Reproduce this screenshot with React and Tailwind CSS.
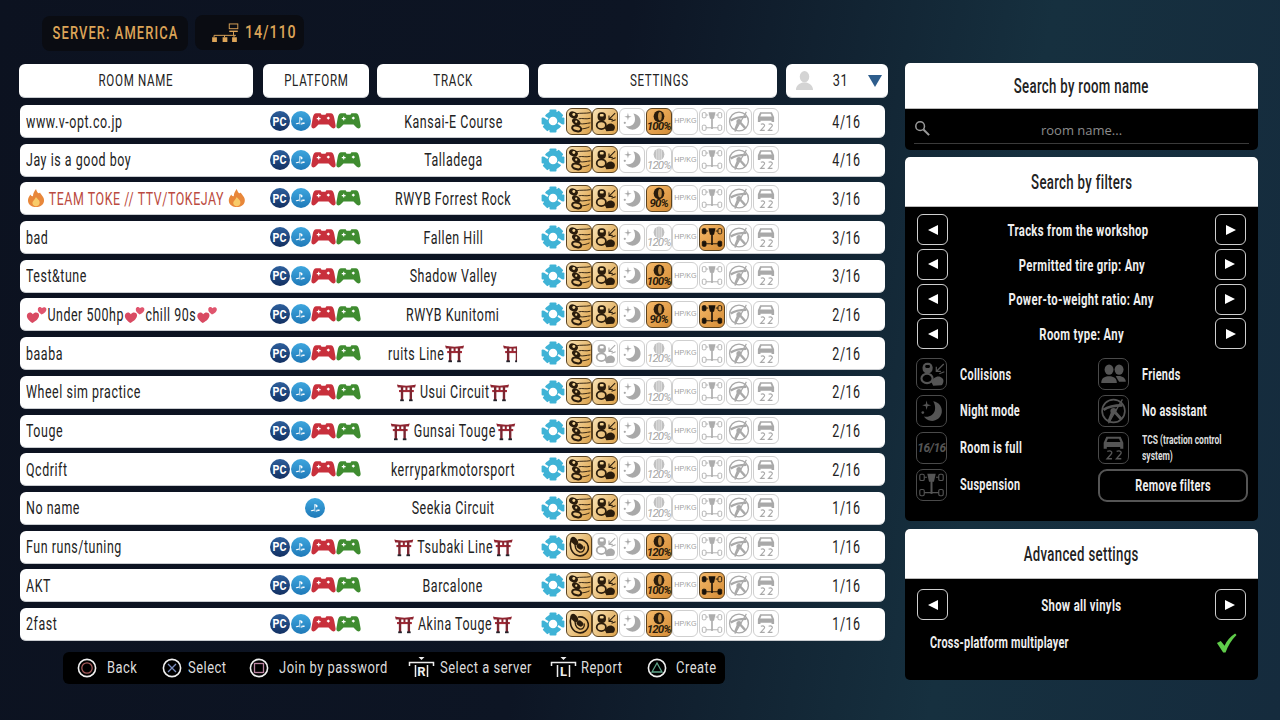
import React from "react";

const F = "font-['Roboto','Liberation_Sans',sans-serif]";
const D = "#2a1c0c";
const G = "#a9a9a9";

function Torii({ className = "w-[29px] h-[20px]" }) {
  return (
    <svg viewBox="0 0 20 20" preserveAspectRatio="none" className={`${className} shrink-0`}>
      <path d="M0.5 2.5 C6 4 14 4 19.5 2.5 L18.6 5.6 H1.4Z" fill="#8f2430" />
      <rect x="2.6" y="8" width="14.8" height="2.1" fill="#a42b38" />
      <rect x="4.4" y="5" width="2.4" height="14" fill="#7c2530" />
      <rect x="13.2" y="5" width="2.4" height="14" fill="#7c2530" />
      <rect x="9" y="5" width="2" height="3.4" fill="#8f2430" />
      <rect x="3.8" y="17.4" width="3.6" height="1.8" fill="#23232b" />
      <rect x="12.6" y="17.4" width="3.6" height="1.8" fill="#23232b" />
    </svg>
  );
}

function Flame() {
  return (
    <svg viewBox="0 0 20 20" preserveAspectRatio="none" className="w-[29px] h-[20px] shrink-0">
      <path d="M10 1 C11 5 13 6 14 4.5 C15 7 18.5 9 18 13 C17.5 17 14 19 10 19 C6 19 2.5 17 2 13 C1.7 10 3.5 8 4.5 6.5 C5 8 6 8.5 7 8 C7 5 8.5 3 10 1Z" fill="#e8873a" />
      <path d="M10 9 C11 11 14 12 13.6 15 C13.3 17.4 11.5 18.2 10 18.2 C8 18.2 6.4 17 6.4 15 C6.4 13 8.5 12 10 9Z" fill="#f8cb6a" />
    </svg>
  );
}

function Hearts() {
  return (
    <svg viewBox="0 0 22 20" preserveAspectRatio="none" className="w-[31px] h-[20px] shrink-0">
      <path d="M6.5 19 C2 16 0.5 13.5 1 11 C1.6 8 5.4 7.6 7 10.2 C8.8 7.8 13 8 13.4 11 C13.8 14 10.4 17 6.5 19Z" fill="#d94a62" />
      <path d="M16 10.6 C13 8.6 11.8 6.8 12.2 4.8 C12.7 2.8 15.2 2.4 16.4 4.2 C17.8 2.6 20.8 3 21 5.2 C21.2 7.4 19 9.4 16 10.6Z" fill="#e0556e" />
    </svg>
  );
}

function Pad({ color }) {
  return (
    <svg viewBox="0 0 26 18" className="w-[25px] h-[18px] -ml-[1px] shrink-0">
      <path d="M5.5 1 H10 L11 2.6 H15 L16 1 H20.5 C22.6 1 23.6 3 24.2 6 L25.6 13.6 C26 16.8 22.8 17.8 21 15.6 L18.2 12.6 H7.8 L5 15.6 C3.2 17.8 0 16.8 0.4 13.6 L1.8 6 C2.4 3 3.4 1 5.5 1Z" fill={color} />
      <path d="M6 6.6 H10 M8 4.6 V8.6" stroke="#fff" strokeWidth="1.2" />
      <path d="M18 4.2 L19.8 6 L18 7.8 L16.2 6Z" fill="#fff" />
    </svg>
  );
}

function PcBadge() {
  return (
    <div className="w-[20px] h-[20px] shrink-0 rounded-full bg-[linear-gradient(180deg,#2d5f9c,#123062)] flex items-center justify-center">
      <span className="text-[13px] font-bold text-white leading-none scale-x-[.82] tracking-[0px]">PC</span>
    </div>
  );
}

function PsBadge() {
  return (
    <div className="w-[20px] h-[20px] shrink-0 rounded-full bg-[linear-gradient(180deg,#3ea6de,#1f79b8)] flex items-center justify-center">
      <svg viewBox="0 0 14 12" className="w-[11px] h-[10px]">
        <path d="M5.6 1 L8.6 2 C10 2.6 10 5.4 8.2 5.2 L7.3 4.9 V2.8 H6.6 V10.6 L5.6 10.2Z" fill="#fff" />
        <path d="M5 8 L1.6 9 C0.4 9.5 1 10.4 2.4 10.2 L5 9.4Z M7.4 8.4 C9 7.6 12.6 7.5 12.8 8.6 C12.9 9.4 10 10.2 7.4 10.8 V9.8 L10.6 8.9 L7.4 9.2Z" fill="#fff" />
      </svg>
    </div>
  );
}

function Gear() {
  return (
    <svg viewBox="0 0 24 24" className="w-[24px] h-[24px] shrink-0">
      <g fill="#3fb3d6">
        <rect x="8.5" y="0.6" width="7" height="5" rx="1" />
        <rect x="8.5" y="18.4" width="7" height="5" rx="1" />
        <rect x="0.6" y="8.5" width="5" height="7" rx="1" />
        <rect x="18.4" y="8.5" width="5" height="7" rx="1" />
        <rect x="8.5" y="0.6" width="7" height="5" rx="1" transform="rotate(45 12 12)" />
        <rect x="8.5" y="0.6" width="7" height="5" rx="1" transform="rotate(225 12 12)" />
      </g>
      <circle cx="12" cy="12" r="7" fill="none" stroke="#3fb3d6" strokeWidth="5.4" />
      <path d="M1.5 6.5 L7 10.2 M22.5 17.5 L17 13.8" stroke="#fff" strokeWidth="2" />
    </svg>
  );
}

function DriftGlyph({ c }) {
  return (
    <g fill="none" stroke={c} strokeLinecap="round">
      <path d="M10 4.6 C15 3.5 20 4.5 25 3.5 M13 10 C17 9 20 11 25 9.6 M14 15.5 C18 16 21 15 25 14.5 M15 21 C18 21 21 20.5 24 19" strokeWidth="1" />
      <ellipse cx="7" cy="6" rx="5" ry="3.6" fill={c} stroke="none" transform="rotate(25 7 6)" />
      <ellipse cx="10" cy="13.5" rx="5" ry="3.2" fill={c} stroke="none" transform="rotate(35 10 13.5)" />
      <ellipse cx="10.5" cy="20.5" rx="5" ry="3" fill="none" strokeWidth="2.2" transform="rotate(15 10.5 20.5)" />
      <circle cx="7.4" cy="5.4" r="1.6" fill="#f3d291" stroke="none" />
      <circle cx="10" cy="13.2" r="1.2" fill="#f3d291" stroke="none" />
    </g>
  );
}

function SwirlGlyph({ c }) {
  return (
    <g fill="none" stroke={c} strokeLinecap="round">
      <path d="M5 5 C2 11 4 20 11 22.5 C18 25 24 19 23 13 C22 8 17 5 12.5 6" strokeWidth="1.7" />
      <path d="M9 8 C8 13 9.5 18 13.5 19 C17 19.8 19.4 16.8 18.6 13.4" strokeWidth="1.5" />
      <ellipse cx="8" cy="7" rx="5" ry="3.2" fill={c} stroke="none" transform="rotate(50 8 7)" />
      <ellipse cx="14" cy="13" rx="3.8" ry="3" fill={c} stroke="none" transform="rotate(40 14 13)" />
    </g>
  );
}

function CollideGlyph({ c, bg }) {
  return (
    <g>
      <rect x="5" y="3" width="9" height="9.4" rx="4" fill={c} />
      <rect x="7.4" y="5" width="4.2" height="2.6" rx="1" fill={bg} />
      <ellipse cx="9" cy="17" rx="5" ry="4.2" fill="none" stroke={c} strokeWidth="1.9" />
      <path d="M13 20.5 C14 16.4 18 14.4 21 15.6 C24.4 17 24.5 20.5 22 23 L14.5 23.5Z" fill={c} />
      <path d="M24 4 L17.5 10.5 M17.3 6.6 V10.7 H21.4 M24.5 11 L20 12.8" stroke={c} strokeWidth="1.1" fill="none" />
    </g>
  );
}

function MoonGlyph({ c = G }) {
  return (
    <g fill={c}>
      <path d="M14.5 4.2 C20 5 23 9.6 22.2 14.4 C21.4 19.6 16.5 22.4 12.2 21.8 C9.6 21.4 7.4 20 6.2 18 C11 19 15 16.5 16 12.6 C16.7 9.6 16 6.6 14.5 4.2Z" />
      <path d="M8.6 3.6 L9.4 7 L12.6 7.9 L9.4 8.8 L8.6 12 L7.8 8.8 L4.6 7.9 L7.8 7Z" />
      <circle cx="5.2" cy="14.4" r="1.2" />
    </g>
  );
}

function TireGlyph({ c, hot }) {
  return (
    <g>
      <ellipse cx="13" cy="7.4" rx="5.8" ry="6.4" fill={hot ? c : "#c0c0c0"} />
      {hot ? (
        <ellipse cx="14" cy="7.4" rx="2" ry="4.6" fill="#c08a40" />
      ) : (
        <path d="M13 1 V14 M10.6 1.6 V13.4 M15.4 1.6 V13.4" stroke="#f2f2f2" strokeWidth="0.8" />
      )}
    </g>
  );
}

function SuspGlyph({ c, bg }) {
  return (
    <g fill="none" stroke={c}>
      <rect x="2.5" y="3.4" width="4" height="5.6" rx="1.2" strokeWidth="1" fill={bg ? c : "none"} />
      <rect x="19.5" y="3.4" width="4" height="5.6" rx="1.2" strokeWidth="1" fill="none" />
      <rect x="2.5" y="17" width="4" height="5.6" rx="1.2" strokeWidth="1" fill={bg ? c : "none"} />
      <rect x="19.5" y="17" width="4" height="5.6" rx="1.2" strokeWidth="1" fill={bg ? c : "none"} />
      <path d="M6.5 6 H9 M17 6 H19.5 M6.5 19.8 H19.5" strokeWidth="1" />
      <path d="M9.2 3 H16.8 L15.2 10 H10.8Z" fill={c} stroke="none" />
      <path d="M13 9 V21" strokeWidth="1.8" />
    </g>
  );
}

function WheelGlyph({ c }) {
  return (
    <g fill="none" stroke={c}>
      <circle cx="13" cy="13" r="10.2" strokeWidth="1.5" />
      <path d="M4 12 C8 9.2 15 8 21 8 M12 14.4 L9 22 M14.8 14.6 L20 20.4" strokeWidth="2.6" />
      <circle cx="13" cy="13" r="2.8" fill={c} stroke="none" />
      <path d="M21 2.6 L8.5 24" strokeWidth="1.2" />
    </g>
  );
}

function TcsGlyph({ c, bg = "#fff" }) {
  return (
    <g>
      <path d="M6.6 3 H19.4 L21.8 8.4 V13.6 H19 V12.2 H7 V13.6 H4.2 V8.4Z" fill={c} />
      <path d="M8 4.6 H18 L19.2 7.6 H6.8Z" fill={bg} />
      <path d="M7.4 16 C11 14.8 12.6 17 10.6 18.8 L7.2 22.6 H11.6 M15.8 16 C19.4 14.8 21 17 19 18.8 L15.6 22.6 H20" fill="none" stroke={c} strokeWidth="1.2" />
    </g>
  );
}

function Tile({ on, tone = "a", children }) {
  const cls =
    tone === "hot"
      ? "relative w-[26px] h-[27px] shrink-0 rounded-[6px] border border-[#5b4320] bg-[linear-gradient(135deg,#f5b868,#d48c36)]"
      : on
      ? "relative w-[26px] h-[27px] shrink-0 rounded-[6px] border border-[#5b4320] bg-[linear-gradient(120deg,#f8e2b4,#dda24a)]"
      : "relative w-[26px] h-[27px] shrink-0 rounded-[6px] border border-[#cfcfcf] bg-white";
  return <div className={cls}>{children}</div>;
}

function Svg({ children }) {
  return (
    <svg viewBox="0 0 26 26" className="w-full h-full block">
      {children}
    </svg>
  );
}

function TireTile({ value, on }) {
  return (
    <Tile on={on} tone={on ? "hot" : "a"}>
      <Svg>
        <TireGlyph c="#2a1c0c" hot={on} />
      </Svg>
      <span
        className={
          on
            ? "absolute left-0 right-0 bottom-[1px] text-center text-[11.5px] leading-none italic font-bold text-[#2a1c0c] tracking-[-0.9px]"
            : "absolute left-0 right-0 bottom-[1px] text-center text-[11.5px] leading-none italic text-[#a5a5a5] tracking-[-0.9px]"
        }
      >
        {value}
      </span>
    </Tile>
  );
}

function HpTile() {
  return (
    <Tile>
      <div className="w-full h-full flex items-center justify-center text-[8px] text-[#a0a0a0] font-['Liberation_Sans',sans-serif] leading-none tracking-normal">
        <span className="scale-x-[.9]">HP/KG</span>
      </div>
    </Tile>
  );
}

function SettingsIcons({ r }) {
  return (
    <div className="w-[240px] shrink-0 flex items-center pl-[2px] gap-[0.7px]">
      <Gear />
      <Tile on>
        <Svg>{r.swirl ? <SwirlGlyph c={D} /> : <DriftGlyph c={D} />}</Svg>
      </Tile>
      <Tile on={!r.offB}>
        <Svg>
          <CollideGlyph c={r.offB ? "#a9a9a9" : D} bg={r.offB ? "#fff" : "#f3d291"} />
        </Svg>
      </Tile>
      <Tile>
        <Svg>
          <MoonGlyph />
        </Svg>
      </Tile>
      <TireTile value={r.tire} on={r.tireOn} />
      <HpTile />
      <Tile on={r.susp} tone={r.susp ? "hot" : "a"}>
        <Svg>
          <SuspGlyph c={r.susp ? "#1b130a" : "#adadad"} bg={r.susp} />
        </Svg>
      </Tile>
      <Tile>
        <Svg>
          <WheelGlyph c={G} />
        </Svg>
      </Tile>
      <Tile>
        <Svg>
          <TcsGlyph c={G} />
        </Svg>
      </Tile>
    </div>
  );
}

const rows = [
  { name: "www.v-opt.co.jp", track: "Kansai-E Course", tire: "100%", tireOn: true, n: "4/16" },
  { name: "Jay is a good boy", track: "Talladega", tire: "120%", n: "4/16" },
  { name: "TEAM TOKE // TTV/TOKEJAY", flame: true, track: "RWYB Forrest Rock", tire: "90%", tireOn: true, n: "3/16" },
  { name: "bad", track: "Fallen Hill", tire: "120%", susp: true, n: "3/16" },
  { name: "Test&tune", track: "Shadow Valley", tire: "100%", tireOn: true, n: "3/16" },
  { hearts: true, track: "RWYB Kunitomi", tire: "90%", tireOn: true, susp: true, n: "2/16" },
  { name: "baaba", cut: true, track: "ruits Line", offB: true, tire: "120%", n: "2/16" },
  { name: "Wheel sim practice", torii: true, track: "Usui Circuit", tire: "120%", n: "2/16" },
  { name: "Touge", torii: true, track: "Gunsai Touge", tire: "120%", n: "2/16" },
  { name: "Qcdrift", track: "kerryparkmotorsport", tire: "120%", n: "2/16" },
  { name: "No name", psOnly: true, track: "Seekia Circuit", tire: "120%", n: "1/16" },
  { name: "Fun runs/tuning", torii: true, track: "Tsubaki Line", swirl: true, offB: true, tire: "120%", tireOn: true, n: "1/16" },
  { name: "AKT", track: "Barcalone", tire: "100%", tireOn: true, susp: true, n: "1/16" },
  { name: "2fast", torii: true, track: "Akina Touge", swirl: true, tire: "120%", tireOn: true, n: "1/16" },
];

function RoomName({ r }) {
  if (r.flame)
    return (
      <div className="flex items-center w-max origin-left scale-x-[.69] text-[#bb4a40]">
        <Flame />
        <span className="ml-[4px] mr-[4px]">{r.name}</span>
        <Flame />
      </div>
    );
  if (r.hearts)
    return (
      <div className="flex items-center w-max origin-left scale-x-[.69]">
        <Hearts />
        <span>Under 500hp</span>
        <Hearts />
        <span>chill 90s</span>
        <Hearts />
      </div>
    );
  return <div className="w-max origin-left scale-x-[.69]">{r.name}</div>;
}

function Track({ r }) {
  if (r.cut)
    return (
      <div className="w-full pl-[19px]">
        <div className="flex items-center w-max origin-left scale-x-[.69]">
          <span>{r.track}</span>
          <Torii />
          <div className="w-[21px] h-[20px] overflow-hidden ml-[55px]">
            <Torii />
          </div>
        </div>
      </div>
    );
  if (r.torii)
    return (
      <div className="flex items-center justify-center w-max scale-x-[.69]">
        <Torii />
        <span className="ml-[5px]">{r.track}</span>
        <Torii />
      </div>
    );
  return <div className="w-max scale-x-[.69]">{r.track}</div>;
}

function Row({ r }) {
  return (
    <div className="h-[33px] w-[865px] ml-[1px] bg-white rounded-[6px] flex items-center text-[18px] font-normal tracking-[0.8px] text-[#222] border-b border-[#c9ccd0]">
      <div className="w-[243px] shrink-0 pl-[6px] whitespace-nowrap">
        <RoomName r={r} />
      </div>
      <div className="w-[106px] shrink-0 flex items-center justify-center gap-[1px] pr-[2px]">
        {r.psOnly ? (
          <PsBadge />
        ) : (
          <>
            <PcBadge />
            <PsBadge />
            <Pad color="#c8303c" />
            <Pad color="#3f8c30" />
          </>
        )}
      </div>
      <div className="w-[170px] shrink-0 flex items-center justify-center whitespace-nowrap pr-[2px]">
        <Track r={r} />
      </div>
      <SettingsIcons r={r} />
      <div className="flex-1 flex justify-center pl-[28px]">
        <div className="w-max scale-x-[.69]">{r.n}</div>
      </div>
    </div>
  );
}

function Head({ w, pad = "", children }) {
  return (
    <div className={`${w} ${pad} h-[34px] bg-white rounded-[6px] flex items-center justify-center text-[17px] tracking-[1px] text-[#222] border-b border-[#c9ccd0]`}>
      <div className="w-max whitespace-nowrap scale-x-[.68]">{children}</div>
    </div>
  );
}

function Arrow({ dir }) {
  return (
    <div className="w-[31px] h-[31px] shrink-0 border border-[#cfcfcf] rounded-[6px] bg-black flex items-center justify-center">
      <svg viewBox="0 0 12 12" className="w-[12px] h-[12px]">
        <path d={dir === "l" ? "M11 1 V11 L1 6Z" : "M1 1 V11 L11 6Z"} fill="#fff" />
      </svg>
    </div>
  );
}

function Stepper({ shift = "", children }) {
  return (
    <div className="flex items-center justify-between h-[31px]">
      <Arrow dir="l" />
      <div className={`${shift} w-max whitespace-nowrap scale-x-[.665] mt-[2px] text-[17px] font-bold tracking-[0.5px] text-[#eee]`}>{children}</div>
      <Arrow dir="r" />
    </div>
  );
}

function PanelHead({ h, children }) {
  return (
    <div className={`${h} bg-white rounded-t-[5px] flex items-center justify-center text-[20px] font-medium tracking-[0.5px] text-[#222] border-b border-[#bbb]`}>
      <div className="w-max whitespace-nowrap scale-x-[.66]">{children}</div>
    </div>
  );
}

function FIcon({ children }) {
  return <div className="relative w-[31px] h-[32px] shrink-0 rounded-[7px] border border-[#4a4a4a]">{children}</div>;
}

function Filter({ icon, label, small }) {
  return (
    <div className="flex items-center h-[32px]">
      <FIcon>{icon}</FIcon>
      {small ? (
        <div className="ml-[13px] w-[125px] shrink-0 origin-left scale-x-[.68] text-[12.5px] leading-[16px] font-bold text-[#ddd]">{label}</div>
      ) : (
        <div className="ml-[13px] w-max whitespace-nowrap origin-left scale-x-[.64] text-[17px] font-bold tracking-[0.5px] text-[#eee]">{label}</div>
      )}
    </div>
  );
}

function Hint({ w, icon, label, gap = "ml-[9px]" }) {
  return (
    <div className={`${w} shrink-0 flex items-center`}>
      {icon}
      <div className={`${gap} w-max whitespace-nowrap origin-left scale-x-[.81] text-[16px] tracking-[0.6px] text-[#ddd]`}>{label}</div>
    </div>
  );
}

function Ps({ glyph }) {
  return (
    <svg viewBox="0 0 20 20" className="w-[20px] h-[20px] shrink-0">
      <circle cx="10" cy="10" r="8.6" fill="none" stroke="#f0f0f0" strokeWidth="1.6" />
      {glyph}
    </svg>
  );
}

function Trig({ letter }) {
  return (
    <div className="relative w-[27px] h-[24px] shrink-0">
      <svg viewBox="0 0 26 24" className="absolute inset-0 w-full h-full">
        <path d="M10 1 H16 L13 4Z" fill="#eee" />
        <path d="M1 10 V6.5 H25 V10 M7 9 V21 M19 9 V21" fill="none" stroke="#eee" strokeWidth="1.5" />
      </svg>
      <span className="absolute left-0 right-0 top-[8px] text-center text-[13px] leading-[15px] font-bold text-[#eee]">{letter}</span>
    </div>
  );
}

export default function App() {
  return (
    <div className={`${F} w-[1280px] h-[720px] overflow-hidden bg-[linear-gradient(100deg,#0c1220_0%,#0d1524_45%,#16303f_75%,#152b3d_100%)]`}>
      <div className="flex gap-[7px] pl-[42px] pt-[15px] h-[63px]">
        <div className="w-[146px] h-[35px] mt-[1px] rounded-[8px] bg-[#0a0c12] flex items-center justify-center text-[19px] tracking-[1.6px] font-medium text-[#dca458]">
          <div className="w-max whitespace-nowrap scale-x-[.68]">SERVER: AMERICA</div>
        </div>
        <div className="w-[109px] h-[35px] rounded-[8px] bg-[#0a0c12] flex items-center pl-[15px] text-[19px] tracking-[1.2px] font-medium text-[#dca458]">
          <svg viewBox="0 0 30 20" className="w-[29px] h-[19px] shrink-0">
            <rect x="20" y="1" width="9" height="5" fill="none" stroke="#dca458" strokeWidth="1" />
            <rect x="20" y="8" width="9" height="1.5" fill="#dca458" />
            <path d="M24.5 9.5 V13 M4 13 H27 M4 13 V15 M15 13 V15 M25 13 V15" fill="none" stroke="#dca458" strokeWidth="1" />
            <rect x="2" y="15" width="5" height="5" fill="#dca458" />
            <rect x="13" y="15" width="5" height="5" fill="#dca458" />
            <rect x="23" y="15" width="5" height="5" fill="#dca458" />
          </svg>
          <div className="ml-[6px] w-max origin-left scale-x-[.75]">14/110</div>
        </div>
      </div>

      <div className="flex pl-[19px]">
        <div className="w-[869px] shrink-0 pt-[1px]">
          <div className="flex">
            <Head w="w-[234px]">ROOM NAME</Head>
            <div className="w-[10px]" />
            <Head w="w-[106px]">PLATFORM</Head>
            <div className="w-[8px]" />
            <Head w="w-[152px]">TRACK</Head>
            <div className="w-[9px]" />
            <Head w="w-[239px]" pad="pl-[3px]">SETTINGS</Head>
            <div className="w-[9px]" />
            <div className="w-[102px] h-[34px] bg-white rounded-[6px] flex items-center pl-[9px] border-b border-[#c9ccd0] text-[17px] tracking-[1px] text-[#222]">
              <svg viewBox="0 0 20 22" className="w-[19px] h-[21px] shrink-0">
                <ellipse cx="10" cy="7" rx="5" ry="6" fill="#d4d4d4" />
                <path d="M1 21 C1 15 6 14 8 13 H12 C14 14 19 15 19 21Z" fill="#d4d4d4" />
              </svg>
              <div className="ml-[16px] w-max scale-x-[.75]">31</div>
              <svg viewBox="0 0 14 12" className="w-[14px] h-[12px] ml-[17px] shrink-0">
                <path d="M0 0 H14 L7 12Z" fill="#2e5d8c" />
              </svg>
            </div>
          </div>

          <div className="mt-[7px] flex flex-col gap-[5.7px]">
            {rows.map((r, i) => (
              <Row key={i} r={r} />
            ))}
          </div>

          <div className="ml-[44px] mt-[11px] w-[662px] h-[32px] bg-black rounded-[6px] flex items-center pl-[14px]">
            <Hint w="w-[85px]" gap="ml-[10px]" icon={<Ps glyph={<circle cx="10" cy="10" r="5.2" fill="none" stroke="#a55a5a" strokeWidth="1.3" />} />} label="Back" />
            <Hint w="w-[87px]" gap="ml-[6px]" icon={<Ps glyph={<path d="M6 6 L14 14 M14 6 L6 14" stroke="#7d8fc0" strokeWidth="1.3" />} />} label="Select" />
            <Hint w="w-[159px]" gap="ml-[10px]" icon={<Ps glyph={<rect x="5.5" y="5.5" width="9" height="9" fill="none" stroke="#b9839f" strokeWidth="1.3" />} />} label="Join by password" />
            <Hint w="w-[142px]" gap="ml-[5px]" icon={<Trig letter="R" />} label="Select a server" />
            <Hint w="w-[97px]" gap="ml-[4px]" icon={<Trig letter="L" />} label="Report" />
            <Hint w="w-[71px]" gap="ml-[9px]" icon={<Ps glyph={<path d="M10 5 L15 14 H5Z" fill="none" stroke="#5fa58a" strokeWidth="1.3" />} />} label="Create" />
          </div>
        </div>

        <div className="w-[353px] ml-[17px] flex flex-col">
          <div className="h-[87px] bg-black rounded-[5px]">
            <PanelHead h="h-[46px]">Search by room name</PanelHead>
            <div className="relative mx-[9px] mt-[10px] h-[25px] border-b border-[#3a3a3a] flex items-center justify-center font-['Open_Sans',sans-serif] text-[13px] text-[#8c8c8c]">
              <svg viewBox="0 0 18 18" className="absolute left-0 top-[1px] w-[17px] h-[17px]">
                <circle cx="6.5" cy="6.5" r="4.6" fill="none" stroke="#9a9a9a" strokeWidth="1.6" />
                <path d="M10 10 L16 16" stroke="#9a9a9a" strokeWidth="2.2" />
              </svg>
              room name...
            </div>
          </div>

          <div className="mt-[7px] h-[364px] bg-black rounded-[5px]">
            <PanelHead h="h-[50px]">Search by filters</PanelHead>
            <div className="px-[12px] pt-[7px] flex flex-col gap-[3.8px]">
              <Stepper shift="-translate-x-[4px]">Tracks from the workshop</Stepper>
              <Stepper>Permitted tire grip: Any</Stepper>
              <Stepper>Power-to-weight ratio: Any</Stepper>
              <Stepper>Room type: Any</Stepper>
            </div>
            <div className="px-[11px] mt-[9px] grid grid-cols-[182px_150px] gap-y-[4.8px]">
              <Filter label="Collisions" icon={<Svg><CollideGlyph c="#555" bg="#000" /></Svg>} />
              <Filter label="Friends" icon={<Svg><g fill="#555"><ellipse cx="9" cy="9" rx="4" ry="4.6" /><ellipse cx="18" cy="9" rx="4" ry="4.6" /><path d="M2 21 C2 16 6 15 9 15 C12 15 16 16 16 21Z" /><path d="M15 15 C20 14 24 16 24 20 H18Z" /></g></Svg>} />
              <Filter label="Night mode" icon={<Svg><MoonGlyph c="#555" /></Svg>} />
              <Filter label="No assistant" icon={<Svg><WheelGlyph c="#555" /></Svg>} />
              <Filter label="Room is full" icon={<div className="w-full h-full flex items-center justify-center text-[12px] italic font-bold text-[#555] tracking-[-0.5px]">16/16</div>} />
              <Filter small label="TCS (traction control system)" icon={<Svg><TcsGlyph c="#555" bg="#000" /></Svg>} />
              <Filter label="Suspension" icon={<Svg><SuspGlyph c="#555" /></Svg>} />
              <div className="h-[33px] border-2 border-[#555] rounded-[9px] flex items-center justify-center text-[17px] font-bold tracking-[0.5px] text-[#eee]">
                <div className="w-max whitespace-nowrap scale-x-[.64]">Remove filters</div>
              </div>
            </div>
          </div>

          <div className="mt-[8px] h-[151px] bg-black rounded-[5px]">
            <PanelHead h="h-[50px]">Advanced settings</PanelHead>
            <div className="px-[12px] pt-[10px]">
              <Stepper>Show all vinyls</Stepper>
            </div>
            <div className="flex items-center justify-between pl-[25px] pr-[21px] mt-[10px]">
              <div className="w-max whitespace-nowrap origin-left scale-x-[.64] text-[17px] font-bold tracking-[0.4px] text-[#eee]">Cross-platform multiplayer</div>
              <svg viewBox="0 0 22 20" className="w-[21px] h-[20px] shrink-0">
                <path d="M1 10 L5 8 L9 13 C11 8 15 3 20 0 L21.5 1.5 C16 7 12.5 13 10 20 H7.5Z" fill="#5fcc4a" />
              </svg>
            </div>
          </div>
        </div>
      </div>
    </div>
  );
}
